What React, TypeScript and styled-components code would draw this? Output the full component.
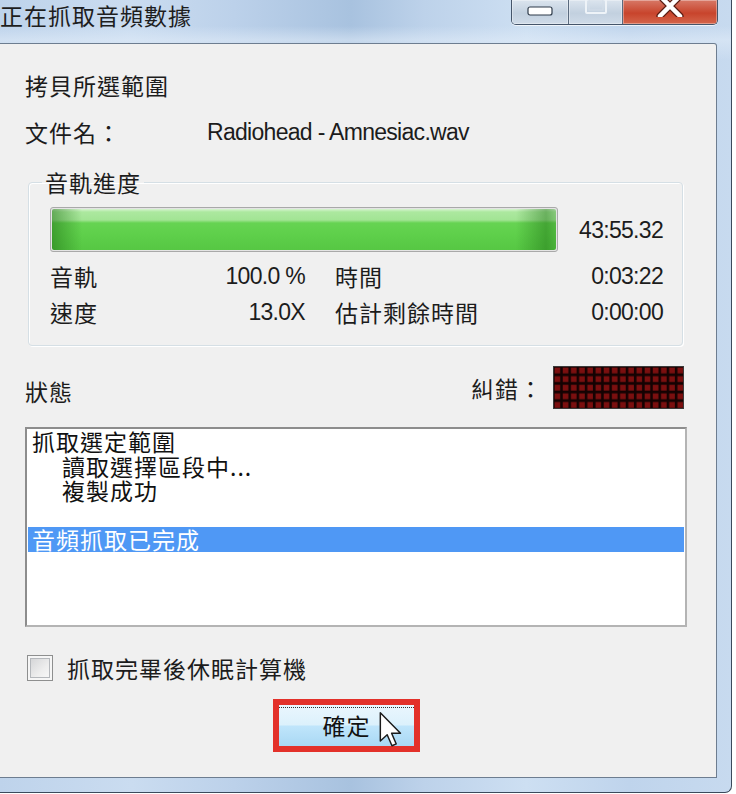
import React from 'react';
import styled, { createGlobalStyle } from 'styled-components';

const cjk = `"Noto Sans CJK TC", "Noto Sans CJK SC", sans-serif`;
const latin = `"Liberation Sans", Arial, sans-serif`;

const GlobalStyle = createGlobalStyle`
  html, body {
    margin: 0;
    padding: 0;
    background: #fff;
  }
  body {
    font-family: ${cjk};
    color: #1c1c1c;
  }
  * {
    box-sizing: border-box;
  }
`;

type LogLine = {
  text: string;
  indent?: boolean;
  selected?: boolean;
};

const logLines: LogLine[] = [
  { text: '抓取選定範圍' },
  { text: '讀取選擇區段中...', indent: true },
  { text: '複製成功', indent: true },
  { text: ' ' },
  { text: '音頻抓取已完成', selected: true },
];

const progress = 100;

const App = (): JSX.Element => {
  return (
    <>
      <GlobalStyle />
      <Window>
        <TitleBar>
          <Title>正在抓取音頻數據</Title>
          <Controls>
            <CtrlButton $w={56}>
              <svg width="26" height="10" viewBox="0 0 26 10">
                <rect x="1" y="1" width="24" height="8" rx="2" fill="#fff" stroke="#2f3b4a" strokeWidth="1.2" />
              </svg>
            </CtrlButton>
            <CtrlButton $w={54}>
              <svg width="22" height="14" viewBox="0 0 22 14">
                <rect x="1" y="-4" width="20" height="17" rx="1" fill="none" stroke="#eef3f8" strokeWidth="2" />
                <rect x="4" y="0" width="14" height="10" fill="none" stroke="#d3dde8" strokeWidth="1" />
              </svg>
            </CtrlButton>
            <CtrlButton $w={95} $close>
              <svg width="28" height="17" viewBox="0 0 28 17">
                <path d="M4 -4 L24 16 M24 -4 L4 16" stroke="#5a1c12" strokeWidth="7" strokeLinecap="round" />
                <path d="M4 -4 L24 16 M24 -4 L4 16" stroke="#fff" strokeWidth="4.5" strokeLinecap="round" />
              </svg>
            </CtrlButton>
          </Controls>
        </TitleBar>

        <Client>
          <Heading>拷貝所選範圍</Heading>
          <FileRow>
            <FileLabel>文件名：</FileLabel>
            <LatinText>Radiohead - Amnesiac.wav</LatinText>
          </FileRow>

          <Group>
            <Legend>音軌進度</Legend>
            <GroupBody>
              <ProgressRow>
                <Progress>
                  <Fill style={{ width: `${progress}%` }} />
                </Progress>
                <LatinText>43:55.32</LatinText>
              </ProgressRow>
              <Stats>
                <Stat>
                  <StatLabel>音軌</StatLabel>
                  <LatinText>100.0 %</LatinText>
                </Stat>
                <Stat>
                  <StatLabel>時間</StatLabel>
                  <LatinText>0:03:22</LatinText>
                </Stat>
                <Stat>
                  <StatLabel>速度</StatLabel>
                  <LatinText>13.0X</LatinText>
                </Stat>
                <Stat>
                  <StatLabel>估計剩餘時間</StatLabel>
                  <LatinText>0:00:00</LatinText>
                </Stat>
              </Stats>
            </GroupBody>
          </Group>

          <StatusRow>
            <StatusLabel>狀態</StatusLabel>
            <ErrorLabel>糾錯：</ErrorLabel>
            <Led width="131" height="43" viewBox="0 0 131 43">
              <defs>
                <pattern id="led" width="8.1875" height="8.6" patternUnits="userSpaceOnUse">
                  <rect x="1.6" y="1.6" width="5.6" height="5.8" fill="#7b0f0f" />
                </pattern>
              </defs>
              <rect x="0" y="0" width="131" height="43" fill="#140202" />
              <rect x="0" y="0" width="131" height="43" fill="url(#led)" />
              <rect x="0.5" y="0.5" width="130" height="42" fill="none" stroke="#3a3a3a" />
            </Led>
          </StatusRow>

          <ListBox>
            {logLines.map((line, i) => (
              <ListItem key={i} $indent={line.indent} $selected={line.selected}>
                {line.text}
              </ListItem>
            ))}
          </ListBox>

          <CheckRow>
            <CheckBox />
            <CheckLabel>抓取完畢後休眠計算機</CheckLabel>
          </CheckRow>

          <Highlight>
            <OkButton>確定</OkButton>
            <Cursor width="25" height="37" viewBox="0 0 13 20">
              <path
                d="M1 1 L1 16.2 L4.7 12.8 L7.3 18.8 L9.6 17.8 L7.1 12 L11.9 12 Z"
                fill="#fff"
                stroke="#1b1b1b"
                strokeWidth="0.8"
                strokeLinejoin="round"
              />
            </Cursor>
          </Highlight>
        </Client>
      </Window>
    </>
  );
};

export default App;

const Window = styled.div`
  width: 732px;
  height: 793px;
  display: flex;
  flex-direction: column;
  background:
    linear-gradient(180deg, rgba(255, 255, 255, 0) 0, rgba(255, 255, 255, 0) 26px, rgba(225, 236, 248, 0.55) 40px, rgba(225, 236, 248, 0) 60px),
    linear-gradient(90deg, #bed3eb 0%, #cadcf0 18%, #bcd1ea 32%, #a8c2df 48%, #bdd2ea 58%, #cddff2 72%, #bfd4ec 86%, #c7daef 100%);
  border-right: 1px solid #3b4a5c;
  border-bottom: 1px solid #3b4a5c;
  border-bottom-right-radius: 7px;
`;

const TitleBar = styled.div`
  flex: 0 0 43px;
  display: flex;
  align-items: flex-start;
  padding-right: 13px;
`;

const Title = styled.div`
  font: 23px/30px ${cjk};
  letter-spacing: 1px;
  color: #1e1e1e;
`;

const Controls = styled.div`
  margin-left: auto;
  display: flex;
  height: 25px;
  border: 1px solid #45556a;
  border-top: none;
  border-radius: 0 0 5px 5px;
  overflow: hidden;
  box-shadow: 0 1px 0 rgba(255, 255, 255, 0.7);
`;

const CtrlButton = styled.div<{ $w: number; $close?: boolean }>`
  width: ${p => p.$w}px;
  display: flex;
  justify-content: center;
  align-items: flex-start;
  padding-top: ${p => (p.$close ? 0 : 6)}px;
  background: ${p =>
    p.$close
      ? 'linear-gradient(180deg, #d77866 0%, #c8442c 55%, #d4654b 100%)'
      : 'linear-gradient(180deg, #dbe4ee 0%, #c2d0df 55%, #cfdbe8 100%)'};
  box-shadow: inset 0 0 0 1px rgba(255, 255, 255, 0.35);

  & + & {
    border-left: 1px solid #5a6a7e;
  }

  &:nth-child(2) {
    padding-top: 0;
  }
`;

const Client = styled.div`
  flex: 1;
  margin: 0 14px 14px 0;
  padding: 0 29px 0 25px;
  display: flex;
  flex-direction: column;
  background: #f0f0f0;
  border: 1px solid #6d7d90;
  border-left: none;
  border-radius: 0 3px 0 0;
`;

const Text = styled.div`
  font: 23px/28px ${cjk};
  letter-spacing: 1px;
  color: #1c1c1c;
`;

const LatinText = styled.span`
  font: 23px/28px ${latin};
  letter-spacing: -0.7px;
  color: #1c1c1c;
`;

const Heading = styled(Text)`
  margin-top: 27px;
`;

const FileRow = styled.div`
  display: flex;
  align-items: center;
  height: 28px;
  margin-top: 19px;
`;

const FileLabel = styled(Text)`
  width: 182px;
`;

const Group = styled.fieldset`
  margin: 23px 4px 0 3px;
  padding: 0;
  min-width: 0;
  border: 1px solid #d5dfe5;
  border-radius: 4px;
  box-shadow: inset 1px 1px 0 #fff, 1px 1px 0 #fff;
`;

const Legend = styled.legend`
  margin-left: 13px;
  padding: 0 3px;
  font: 23px/26px ${cjk};
  letter-spacing: 1px;
  color: #1c1c1c;
`;

const GroupBody = styled.div`
  padding: 0 19px 15px 21px;
`;

const ProgressRow = styled.div`
  display: flex;
  align-items: center;
  justify-content: space-between;
  margin-top: 12px;
`;

const Progress = styled.div`
  width: 508px;
  height: 45px;
  padding: 1px;
  border: 1px solid #a9a9a9;
  border-radius: 3px;
  background: #e4e4e4;
`;

const Fill = styled.div`
  height: 100%;
  border-radius: 2px;
  background:
    linear-gradient(90deg, rgba(28, 110, 18, 0.5) 0, rgba(28, 110, 18, 0) 30px, rgba(28, 110, 18, 0) calc(100% - 40px), rgba(28, 110, 18, 0.45) calc(100% - 10px), rgba(28, 110, 18, 0.25) 100%),
    linear-gradient(180deg, #d6f4cf 0, #ace89f 3px, #a2e494 11px, #66d352 14px, #5fd04b 60%, #56c743 100%);
`;

const Stats = styled.div`
  display: grid;
  grid-template-columns: 255px 328px;
  column-gap: 30px;
  margin-top: 6px;
`;

const Stat = styled.div`
  display: flex;
  justify-content: space-between;
  align-items: center;
  height: 36px;
`;

const StatLabel = styled.span`
  font: 23px/36px ${cjk};
  letter-spacing: 1px;
`;

const StatusRow = styled.div`
  display: flex;
  align-items: center;
  height: 43px;
  margin: 20px 3px 0 0;
`;

const StatusLabel = styled(Text)`
  margin-top: 6px;
`;

const ErrorLabel = styled(Text)`
  margin-left: auto;
  margin-right: 10px;
`;

const Led = styled.svg`
  display: block;
  flex: 0 0 auto;
`;

const ListBox = styled.div`
  margin-top: 18px;
  height: 200px;
  padding: 0 1px;
  background: #fff;
  border: 2px solid;
  border-color: #8d8d8d #b4b4b4 #b4b4b4 #8d8d8d;
`;

const ListItem = styled.div<{ $indent?: boolean; $selected?: boolean }>`
  height: 24.5px;
  padding-left: ${p => (p.$indent ? 34 : 4)}px;
  font: 23px/24.5px ${cjk};
  letter-spacing: 1px;
  white-space: pre;
  color: ${p => (p.$selected ? '#fff' : '#111')};
  background: ${p => (p.$selected ? '#4f98f5' : 'transparent')};
`;

const CheckRow = styled.label`
  display: flex;
  align-items: center;
  height: 28px;
  margin-top: 27px;
  padding-left: 2px;
`;

const CheckBox = styled.span`
  width: 26px;
  height: 26px;
  border: 1px solid #8e8f8f;
  background: linear-gradient(135deg, #cfd0d2 0%, #eeeeee 60%, #fafafa 100%);
  box-shadow: inset 0 0 0 2px #f6f6f6, inset 0 0 0 3px #b5b8bc;
`;

const CheckLabel = styled(Text)`
  margin-left: 14px;
`;

const Highlight = styled.div`
  position: relative;
  align-self: flex-start;
  margin: 17px 0 0 248px;
  border: 6px solid #e3312a;
`;

const OkButton = styled.button`
  position: relative;
  display: block;
  width: 135px;
  height: 41px;
  padding: 0;
  border: none;
  font: 23px/41px ${cjk};
  letter-spacing: 1px;
  color: #111;
  background: linear-gradient(180deg, #eaf6fd 0%, #dcf1fc 48%, #bfe5fb 52%, #a9d8f4 100%);

  &::before {
    content: '';
    position: absolute;
    top: 2px;
    left: 0;
    right: 0;
    border-top: 1px dotted #333;
  }
`;

const Cursor = styled.svg`
  position: absolute;
  left: 99px;
  top: 6px;
`;
